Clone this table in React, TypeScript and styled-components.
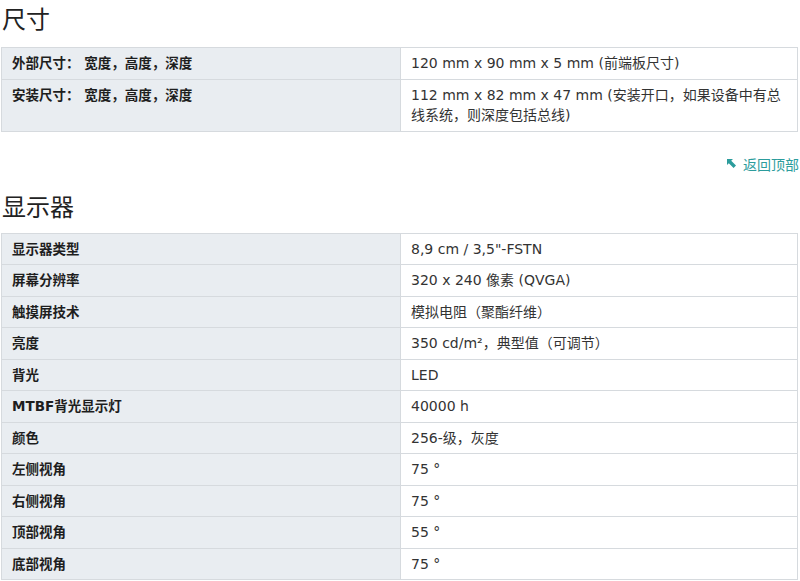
import styled, { createGlobalStyle } from "styled-components"

const GlobalStyle = createGlobalStyle`
html, body {
    margin: 0;
    padding: 0;
    background: #fff;
    overflow-x: hidden;
}
body {
    font-family: "DejaVu Sans", "Noto Sans CJK SC", sans-serif;
    color: #333;
}
`

const Page = styled.div`
width: 797px;
padding: 0 0 0 1px;
`

const Heading = styled.h2<{ $top?: number }>`
margin: ${p => p.$top ?? 0}px 0 0 1px;
font-family: "Noto Sans CJK SC", sans-serif;
font-weight: 400;
font-size: 24px;
line-height: 36px;
color: #222;
`

const Table = styled.table<{ $top: number }>`
width: 797px;
margin-top: ${p => p.$top}px;
border-collapse: collapse;
table-layout: fixed;
border: 1px solid #d6dade;
font-size: 14px;

td {
    border: 1px solid #d6dade;
    padding: 5px 10px;
    line-height: 20.5px;
    vertical-align: top;
}
`

const Label = styled.td`
width: 378px;
background: #e9edf1;
font-weight: 700;
font-size: 13.5px;
color: #1e1e1e;
white-space: pre;
`

const Value = styled.td`
background: #fff;
color: #333;
`

const TopLink = styled.div`
display: flex;
justify-content: flex-end;
align-items: center;
gap: 7px;
margin: 22px -1px 0 0;
height: 20px;
font-family: "Noto Sans CJK SC", sans-serif;
font-size: 14px;
color: #2c9c9c;
`

type Row = [string, string]

const sizeRows: Row[] = [
    ["外部尺寸： 宽度，高度，深度", "120 mm x 90 mm x 5 mm (前端板尺寸)"],
    ["安装尺寸： 宽度，高度，深度", "112 mm x 82 mm x 47 mm (安装开口，如果设备中有总线系统，则深度包括总线)"],
]

const displayRows: Row[] = [
    ["显示器类型", "8,9 cm / 3,5\"-FSTN"],
    ["屏幕分辨率", "320 x 240 像素 (QVGA)"],
    ["触摸屏技术", "模拟电阻（聚酯纤维）"],
    ["亮度", "350 cd/m²，典型值（可调节）"],
    ["背光", "LED"],
    ["MTBF背光显示灯", "40000 h"],
    ["颜色", "256-级，灰度"],
    ["左侧视角", "75 °"],
    ["右侧视角", "75 °"],
    ["顶部视角", "55 °"],
    ["底部视角", "75 °"],
]

function SpecTable({ rows, top }: { rows: Row[]; top: number }) {
    return (
        <Table $top={top}>
            <tbody>
                {rows.map(([label, value], i) => (
                    <tr key={i}>
                        <Label>{label}</Label>
                        <Value>{value}</Value>
                    </tr>
                ))}
            </tbody>
        </Table>
    )
}

export default function App() {
    return (
        <Page>
            <GlobalStyle />
            <Heading>尺寸</Heading>
            <SpecTable rows={sizeRows} top={11} />
            <TopLink>
                <svg width="9" height="9" viewBox="0 0 9 9">
                    <path d="M0 0 L6 0 L4.2 1.8 L9 6.6 L6.6 9 L1.8 4.2 L0 6 Z" fill="#2c9c9c" />
                </svg>
                <span>返回顶部</span>
            </TopLink>
            <Heading $top={14}>显示器</Heading>
            <SpecTable rows={displayRows} top={9} />
        </Page>
    )
}
